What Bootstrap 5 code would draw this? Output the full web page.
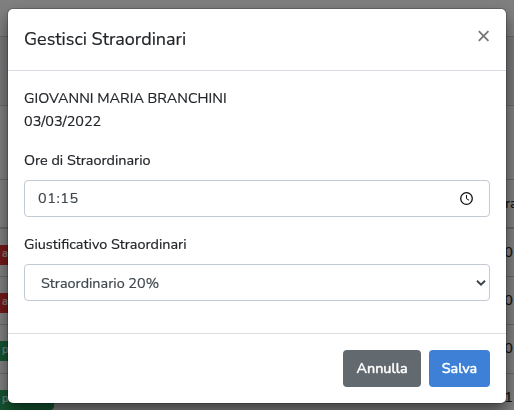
<!DOCTYPE html>
<html lang="it">
<head>
<meta charset="utf-8">
<meta name="viewport" content="width=device-width, initial-scale=1">
<title>Gestisci Straordinari</title>
<link href="https://cdn.jsdelivr.net/npm/bootstrap@5.3.0/dist/css/bootstrap.min.css" rel="stylesheet">
<style>
body{font-family:Nunito,Lato,"Noto Sans",sans-serif;font-size:14.4px;line-height:23px;color:#212529;height:410px;overflow:hidden;-webkit-text-stroke:.2px currentColor}
.sheet{height:410px;overflow:hidden;background:#fff}
.sheet-row{height:48.2px;border-bottom:1px solid #d0d0d4;flex:none}
.sheet-top{height:37px}
.sheet-filter{height:69px;background:#f0f0f4}
.sheet-blank{height:74px}
.sheet-head{height:49px;border-bottom-width:2px}
.tag{width:54px;height:20px;margin-top:5px;font-size:11px;line-height:18px;padding-left:2px;border-radius:0 4px 4px 0;color:#fff}
.tag-red{background:#e3342f}
.tag-green{background:#28a760}
.cell{width:13px;white-space:nowrap;color:#212529}
.cell-head{width:17px}
.modal-backdrop{opacity:.5}
.modal-dialog{margin:9px 8px 0;max-width:none}
.modal-content{border:0;border-radius:5px;height:394px;box-shadow:0 0 0 1px rgba(0,0,0,.2),0 8px 16px rgba(0,0,0,.5)}
.modal-header{height:62px;padding:0 16px;border-color:#d9dbe2}
.modal-title{font-size:18px;line-height:27px}
.close-x{width:12px;height:12px;margin:-7px 0 0;color:#777}
.modal-body{padding:16px}
.form-label{margin:0 0 8px;line-height:23px}
.field{height:37px;border:1px solid #c3cad3;border-radius:4px;color:#3f464d;padding:0 16px 0 13px}
.field svg{flex:none}
.time{letter-spacing:.6px}
.field-select{padding:1px 3px 0 16px}
.modal-footer{height:70px;padding:16px;gap:8px;border-color:#dedede}
.modal-footer .btn{margin:0;height:37px;padding:0;font-size:14.4px;font-weight:400;border:0;border-radius:4px;color:#fff;-webkit-text-stroke:.5px currentColor}
.btn-cancel,.btn-cancel:hover{width:78px;background:#626a70}
.btn-save,.btn-save:hover{width:61px;background:#3d80d6}
</style>
</head>
<body>
<div class="sheet d-flex flex-column" aria-hidden="true">
  <div class="sheet-row sheet-top"></div>
  <div class="sheet-row sheet-filter"></div>
  <div class="sheet-row sheet-blank"></div>
  <div class="sheet-row sheet-head d-flex align-items-center justify-content-end"><span class="cell cell-head">ora</span></div>
  <div class="sheet-row d-flex align-items-center justify-content-between"><span class="tag tag-red">a</span><span class="cell">:0</span></div>
  <div class="sheet-row d-flex align-items-center justify-content-between"><span class="tag tag-red">a</span><span class="cell">:0</span></div>
  <div class="sheet-row d-flex align-items-center justify-content-between"><span class="tag tag-green">p</span><span class="cell">:0</span></div>
  <div class="sheet-row d-flex align-items-center justify-content-between"><span class="tag tag-green">p</span><span class="cell">:1</span></div>
</div>
<div class="modal-backdrop"></div>
<div class="modal show d-block overflow-hidden" tabindex="-1" role="dialog" aria-labelledby="title">
  <div class="modal-dialog">
    <div class="modal-content">
      <div class="modal-header d-flex justify-content-between align-items-center">
        <h5 class="modal-title fw-normal" id="title">Gestisci Straordinari</h5>
        <svg class="close-x" viewBox="0 0 12 12" fill="none" stroke="currentColor" stroke-width="1.8" role="button" aria-label="Chiudi"><path d="M.8 1.2l9.6 9.6M10.4 1.2l-9.6 9.6"/></svg>
      </div>
      <div class="modal-body">
        <div class="person">GIOVANNI MARIA BRANCHINI</div>
        <div class="date mb-3">03/03/2022</div>
        <div class="form-label">Ore di Straordinario</div>
        <div class="field d-flex align-items-center justify-content-between mb-3">
          <span class="time">01:15</span>
          <svg width="13" height="13" viewBox="0 0 13 13" fill="none" stroke="#111"><circle cx="6.5" cy="6.5" r="5.8" stroke-width="1.3"/><path d="M6.5 3v3.7l2.6 1.6" stroke-width="1"/></svg>
        </div>
        <div class="form-label">Giustificativo Straordinari</div>
        <div class="field field-select d-flex align-items-center justify-content-between">
          <span class="option">Straordinario 20%</span>
          <svg width="10" height="7" viewBox="0 0 10 7" fill="none" stroke="#3d444b" stroke-width="2"><path d="M1 .8l4 3.8 4-3.8"/></svg>
        </div>
      </div>
      <div class="modal-footer">
        <button type="button" class="btn btn-cancel">Annulla</button>
        <button type="button" class="btn btn-save">Salva</button>
      </div>
    </div>
  </div>
</div>
<script src="https://cdn.jsdelivr.net/npm/bootstrap@5.3.0/dist/js/bootstrap.bundle.min.js"></script>
</body>
</html>
